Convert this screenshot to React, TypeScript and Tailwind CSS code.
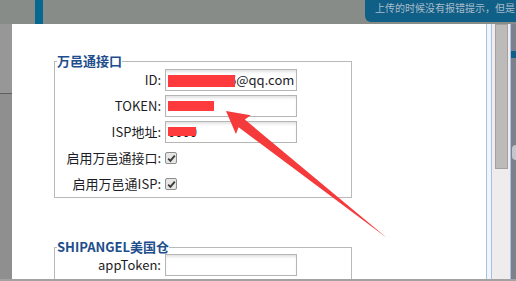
import type { ReactNode } from 'react';

const Row = ({ label, children }: { label: ReactNode; children: ReactNode }) => {
  return (
    <div className="flex h-[22px] items-center">
      <div className="w-[106px] text-right text-[13px] leading-[22px] text-[#1c1c26] whitespace-nowrap">{label}</div>
      <div className="ml-[4px] flex items-center">{children}</div>
    </div>
  );
};

const TextBox = ({ children }: { children?: ReactNode }) => {
  return (
    <div className="relative flex h-[22px] w-[132px] items-center overflow-hidden border border-[#b5b5b5] bg-white pl-[2px] text-[13px] leading-[20px] text-[#1c1c26] shadow-[inset_0_3px_3px_-1px_#e2e2e2]">
      {children}
    </div>
  );
};

const Check = () => {
  return (
    <div className="flex h-[12px] w-[12px] items-center justify-center rounded-[2px] border border-[#8e8e8e] bg-[#e6e6e6]">
      <svg width="9" height="9" viewBox="0 0 9 9">
        <path d="M1.2 4.6 L3.4 6.8 L7.8 1.6" fill="none" stroke="#3a3a3a" strokeWidth="1.8" />
      </svg>
    </div>
  );
};

const App = () => {
  return (
    <div className="relative flex h-[281px] w-[516px] flex-col overflow-hidden bg-[#8f8f8f] font-['Noto_Sans_CJK_SC','Liberation_Sans',sans-serif]">
      {/* top bar with notice */}
      <div className="flex h-[24px] items-start bg-[#888c88]">
        <div className="ml-[35px] h-[24px] w-[8px] bg-[#07688f]" />
        <div className="ml-auto h-[22px] w-[151px] overflow-hidden whitespace-nowrap rounded-bl-[6px] bg-[#0f5f86] pl-[10px] text-[10px] leading-[16px] text-[#a9bccb]">
          上传的时候没有报错提示，但是
        </div>
      </div>

      <div className="flex h-[255px]">
        {/* left backdrop */}
        <div className="flex w-[12px] flex-col">
          <div className="h-[69px] bg-[#979797]" />
          <div className="h-[1px] bg-[#5e5e5e]" />
          <div className="flex-1 bg-[#8f8f8f]" />
        </div>

        {/* dialog */}
        <div className="w-[474px] overflow-hidden bg-white pl-[42px] pt-[30px]">
          <fieldset className="w-[298px] border border-[#b9b9b9] pb-[2px]">
            <legend className="ml-[2px] text-[13px] font-bold leading-[14px] text-[#1e4e8c]">万邑通接口</legend>
            <div className="flex flex-col gap-[4px] pt-[1px]">
              <Row label="ID:">
                <TextBox>
                  <span className="ml-[61px] whitespace-nowrap">6@qq.com</span>
                  <span className="absolute left-[2px] top-[5px] h-[12px] w-[67px] bg-[#fe3a3c]" />
                </TextBox>
              </Row>
              <Row label="TOKEN:">
                <TextBox>
                  <span className="h-[10px] w-[46px] bg-[#fe3a3c]" />
                </TextBox>
              </Row>
              <Row label="ISP地址:">
                <TextBox>
                  <span className="whitespace-nowrap">0000</span>
                  <span className="absolute left-[2px] top-[5px] h-[9px] w-[28px] bg-[#fe3a3c]" />
                </TextBox>
              </Row>
              <Row label="启用万邑通接口:">
                <Check />
              </Row>
              <Row label="启用万邑通ISP:">
                <Check />
              </Row>
            </div>
          </fieldset>

          <fieldset className="mt-[42px] w-[298px] border border-[#b9b9b9] pb-[2px]">
            <legend className="ml-[2px] text-[13px] font-bold leading-[14px] text-[#1e4e8c]">
              SHIPANGEL美国仓
            </legend>
            <div className="flex flex-col gap-[4px]">
              <Row label="appToken:">
                <TextBox />
              </Row>
              <Row label="">
                <TextBox />
              </Row>
            </div>
          </fieldset>
        </div>

        {/* scrollbar */}
        <div className="flex w-[30px]">
          <div className="w-[6px] border-x border-[#a7c1e2] bg-[#f1f4f9]" />
          <div className="w-[18px] bg-[#eeecec] pl-[3px] pr-[2px]">
            <div className="h-[145px] w-[13px] border border-[#a3a0a0] bg-[#bdbaba]" />
          </div>
          <div className="w-[1px] bg-[#a7c1e2]" />
          <div className="flex flex-1 flex-col bg-[#7c808b]">
            <div className="mt-[27px] h-[7px] bg-[#0f5e87]" />
            <div className="ml-auto mt-[87px] h-[15px] w-[4px] rounded-l-full bg-[#c5c6cb]" />
          </div>
        </div>
      </div>

      <div className="h-[2px] bg-[#a2a2a2]" />

      {/* annotation arrow */}
      <svg className="pointer-events-none absolute left-0 top-0" width="516" height="281" viewBox="0 0 516 281">
        <polygon
          points="226,111 250.7,115.2 244.8,119.5 387,238 238.6,127.3 235.9,134"
          fill="#f53a3c"
        />
      </svg>
    </div>
  );
};

export default App;
